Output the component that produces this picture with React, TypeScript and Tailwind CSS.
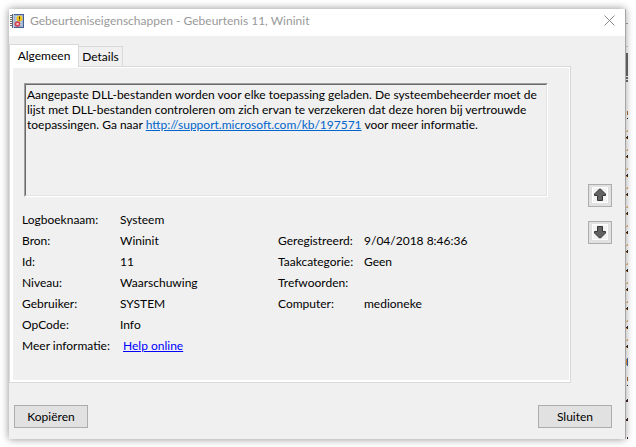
import React from 'react';

interface FieldProps {
  label: string;
  children?: React.ReactNode;
}

const Field: React.FC<FieldProps> = ({ label, children }) => (
  <>
    <dt>{label}</dt>
    <dd>{children}</dd>
  </>
);

const LogIcon = () => (
  <svg viewBox="0 0 16 16" className="h-4 w-4" aria-hidden="true">
    <rect x="2" y="1" width="12" height="14" fill="#46618f" />
    <rect x="3" y="2" width="10" height="12" fill="#9fb5d6" />
    <path d="M5 3.5h7M5 5.5h7M5 7.5h7M5 9.5h7M5 11.5h7" stroke="#c8d6ea" />
    <path d="M0 2.5h3M0 4.5h3M0 6.5h3M0 8.5h3M0 10.5h3M0 12.5h3" stroke="#6b6b6b" />
    <path d="M3.5 1v14" stroke="#c9ccd2" />
    <circle cx="9.5" cy="5.5" r="3" fill="#f3c41d" />
    <path d="M9.5 3.5V6M9.5 6.5v1" stroke="#4a3c00" />
    <circle cx="7.5" cy="11" r="2.8" fill="#d5404a" />
    <path d="M6.5 10l2 2M8.5 10l-2 2" stroke="#fff" strokeWidth=".9" />
  </svg>
);

const CloseIcon = () => (
  <svg viewBox="0 0 11 11" className="h-[11px] w-[11px]" aria-hidden="true">
    <path d="M.5.5l10 10M10.5.5l-10 10" stroke="#8a8a8a" fill="none" />
  </svg>
);

const ArrowIcon = ({ down = false }: { down?: boolean }) => (
  <svg viewBox="0 0 16 16" className="h-4 w-4 bg-white" aria-hidden="true">
    <rect x="1" y="1" width="14" height="14" fill="#f3f3f3" />
    <path
      d={down ? 'M5.5 2.5h5v5h3v1.500l-5 5h-1l-5-5v-1.500h3z' : 'M5.5 13.5h5v-5h3v-1.500l-5-5h-1l-5 5v1.500h3z'}
      fill="#626262"
      stroke="#363636"
    />
  </svg>
);

// Edge of the event list in the window behind the dialog
const ListEdge = () => (
  <svg viewBox="0 0 3 430" className="absolute top-0 left-full h-[430px] w-[3px]" aria-hidden="true">
    <path d="M0 14.5h3" stroke="#8a8a8a" />
    <path d="M0 37.5h3" stroke="#b5b5b5" />
    <path d="M0 44h3v23H0zM0 68h3v2H0zM0 71h3v2H0z" fill="#5c5c5c" />
    <path d="M2.5 102v4M2.5 368v4" stroke="#9a5a24" />
    <path d="M2 109h1v1H2zM2 376h1v1H2z" fill="#2a1a14" />
    {Array.from({ length: 12 }, (_, i) => (
      <g key={i}>
        <path d={`M1 ${122 + i * 19}h1v-1h1v2H1z`} fill="#c9a070" />
        <path d={`M1 ${128 + i * 19}h1v-1h1v3H1z`} fill="#2c2220" />
        <rect x="1" y={129 + i * 19} width="1" height="1" fill="#e08a30" />
      </g>
    ))}
    <path d="M2.5 349v8" stroke="#2c5a9a" />
    <path d="M1.5 350v6" stroke="#d08030" />
    <path d="M1 391h1v-1h1v3H1zM1 410h1v-1h1v3H1zM2 428h1v2H2z" fill="#3a2220" />
    <path d="M.5 0v430" stroke="#a6a6a6" />
  </svg>
);

const arrowButton = 'flex h-[23px] w-6 items-center justify-center border border-[#adadad] bg-[#e1e1e1]';
const textButton = 'h-[23px] w-[74px] border border-[#adadad] bg-[#e1e1e1]';

const App: React.FC = () => (
  <div className="bg-white p-2 pr-[11px] font-['Lato','Open_Sans',sans-serif] text-xs text-black">
    <div className="relative mt-px ml-px bg-[#f0f0f0] shadow-[0_0_8px_rgba(0,0,0,0.45)]">
      <ListEdge />
      <header className="flex h-[27px] items-center bg-white pr-[10px] pb-1 pl-px text-[#999999]">
        <LogIcon />
        <h1 className="ml-1 flex-1">Gebeurteniseigenschappen - Gebeurtenis 11, Wininit</h1>
        <button type="button" aria-label="Sluiten">
          <CloseIcon />
        </button>
      </header>

      <div className="flex pt-2">
        <div className="flex-1">
          <div role="tablist" className="flex items-end">
            <button type="button" role="tab" aria-selected="true" className="z-10 -mb-px h-[23px] w-[70px] border border-b-0 border-[#d9d9d9] bg-white">
              Algemeen
            </button>
            <button type="button" role="tab" aria-selected="false" className="h-5 w-11 border border-b-0 border-l-0 border-[#d9d9d9]">
              Details
            </button>
          </div>
          <section role="tabpanel" className="border border-[#d9d9d9]">
            <div className="border border-b-2 border-l-3 border-white px-[9px] pt-[15px] pb-6">
              <div className="mr-3 ml-[2px] h-[114px] border border-t-[#a0a0a0] border-r-white border-b-white border-l-[#a0a0a0]">
                <p className="h-full border border-t-[#696969] border-r-[#e3e3e3] border-b-[#e3e3e3] border-l-[#696969] pt-[2px] pl-px leading-[15px]">
                  Aangepaste DLL-bestanden worden voor elke toepassing geladen. De systeembeheerder moet de lijst met DLL-bestanden controleren om zich ervan te verzekeren dat deze horen bij vertrouwde toepassingen. Ga naar{' '}
                  <a href="http://support.microsoft.com/kb/197571" className="text-[#0066cc] underline">http://support.microsoft.com/kb/197571</a>{' '}
                  voor meer informatie.
                </p>
              </div>
              <div className="mt-3 flex leading-[21px]">
                <dl className="grid w-64 grid-cols-[98px_1fr]">
                  <Field label="Logboeknaam:">Systeem</Field>
                  <Field label="Bron:">Wininit</Field>
                  <Field label="Id:">11</Field>
                  <Field label="Niveau:">Waarschuwing</Field>
                  <Field label="Gebruiker:">SYSTEM</Field>
                  <Field label="OpCode:">Info</Field>
                  <Field label="Meer informatie:">
                    <a href="#help" className="ml-[3px] text-[#0000ff] underline">Help online</a>
                  </Field>
                </dl>
                <dl className="mt-[21px] grid flex-1 auto-rows-[21px] grid-cols-[86px_1fr]">
                  <Field label="Geregistreerd:">9/04/2018 8:46:36</Field>
                  <Field label="Taakcategorie:">Geen</Field>
                  <Field label="Trefwoorden:" />
                  <Field label="Computer:">medioneke</Field>
                </dl>
              </div>
            </div>
          </section>
        </div>
        <div className="flex w-[54px] flex-col items-center justify-center gap-[14px] pl-1">
          <button type="button" aria-label="Vorige gebeurtenis" className={arrowButton}>
            <ArrowIcon />
          </button>
          <button type="button" aria-label="Volgende gebeurtenis" className={arrowButton}>
            <ArrowIcon down />
          </button>
        </div>
      </div>

      <footer className="flex justify-between pt-[22px] pr-[13px] pb-[11px] pl-[5px]">
        <button type="button" className={textButton}>Kopiëren</button>
        <button type="button" className={textButton}>Sluiten</button>
      </footer>
    </div>
  </div>
);

export default App;
